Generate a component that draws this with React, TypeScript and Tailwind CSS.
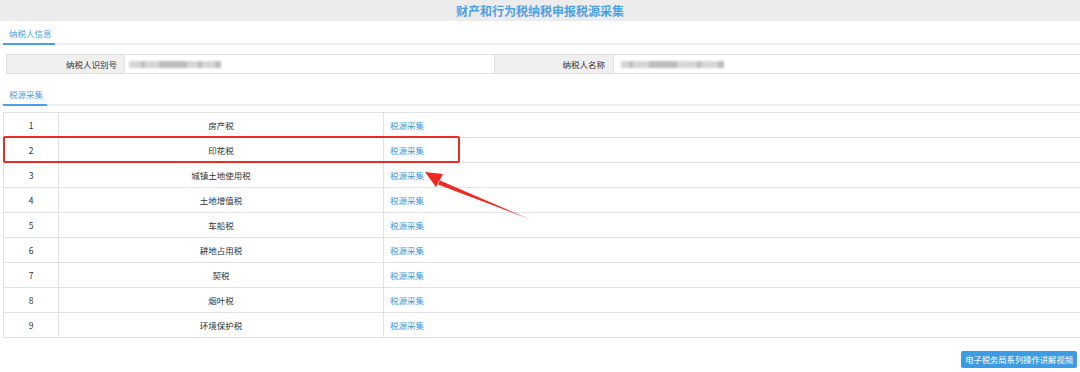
import React from 'react';

const rows = ['房产税', '印花税', '城镇土地使用税', '土地增值税', '车船税', '耕地占用税', '契税', '烟叶税', '环境保护税'];

const font = { fontFamily: '"Microsoft YaHei", "Noto Sans CJK SC", sans-serif' };

/* blurred placeholder for masked values */
const Masked: React.FC<{ widths: number[] }> = ({ widths }) => (
  <div className="flex items-center blur-[1px]">
    {widths.map((w, i) => (
      <div key={i} className={i % 3 === 1 ? 'h-[7px] bg-[#bdbdbd]' : 'h-[7px] bg-[#d6d6d6]'} style={{ width: w }} />
    ))}
  </div>
);

const Tab: React.FC<{ label: string; width: string }> = ({ label, width }) => (
  <div className="border-b-2 border-[#eeeeee] px-[3px]">
    <div className={`${width} -mb-[2px] border-b-2 border-[#4a9fe8] pl-[6px] pb-[4px] text-[8.5px] leading-[12px] text-[#4a9fe8]`}>{label}</div>
  </div>
);

export default function App() {
  return (
    <div className="w-[1080px] h-[372px] bg-white overflow-hidden text-[#333]" style={font}>
      {/* Title */}
      <div className="h-[21px] bg-[#ececec] flex items-center justify-center text-[12px] font-bold text-[#4ba1e7]">
        财产和行为税纳税申报税源采集
      </div>

      {/* Taxpayer info */}
      <div className="pt-[6px]">
        <Tab label="纳税人信息" width="w-[52px]" />
      </div>
      <div className="mt-[9px] ml-[6px] flex h-[20px] border-y border-[#e2e2e2] text-[8.5px]">
        <div className="w-[118px] bg-[#efefef] border-l border-[#e2e2e2] flex items-center justify-end pr-[7px]">纳税人识别号</div>
        <div className="w-[370px] flex items-center pl-[4px] border-l border-[#e2e2e2]">
          <Masked widths={[12, 4, 8, 6, 28, 5, 6, 4, 8, 5, 6]} />
        </div>
        <div className="w-[119px] bg-[#efefef] border-l border-[#e2e2e2] flex items-center justify-end pr-[8px]">纳税人名称</div>
        <div className="flex-1 flex items-center pl-[7px] border-l border-[#e2e2e2]">
          <Masked widths={[8, 4, 10, 6, 28, 6, 14, 4, 12, 5, 6]} />
        </div>
      </div>

      {/* Tax source */}
      <div className="pt-[14px]">
        <Tab label="税源采集" width="w-[44px]" />
      </div>
      <div className="relative mt-[6px] ml-[3px]">
        <div className="border-t border-l border-[#e2e2e2] text-[8.5px]">
          {rows.map((name, i) => (
            <div key={name} className="flex h-[25px] border-b border-[#e2e2e2]">
              <div className="w-[55px] flex items-center justify-center border-r border-[#e2e2e2]">{i + 1}</div>
              <div className="w-[325px] flex items-center justify-center border-r border-[#e2e2e2]">{name}</div>
              <div className="flex-1 flex items-center pl-[6px] text-[#3f97e0]">税源采集</div>
            </div>
          ))}
        </div>

        {/* annotation */}
        <div className="absolute left-0 top-[24px] w-[457px] h-[27px] border-2 border-[#ee2a24] rounded-[2px]" />
        <svg className="absolute left-[418px] top-[56px]" width="112" height="54" viewBox="0 0 112 54">
          <path d="M108 51 L19 12.5 L17 16.5 Z" fill="#ee2a24" />
          <path d="M4 4 L22 6 L15 19 Z" fill="#ee2a24" />
        </svg>
      </div>

      <div className="mt-[13px] flex justify-end pr-[3px]">
        <div className="h-[17px] px-[4px] bg-[#3d9be3] rounded-[2px] flex items-center text-white text-[8.3px]">电子税务局系列操作讲解视频</div>
      </div>
    </div>
  );
}
